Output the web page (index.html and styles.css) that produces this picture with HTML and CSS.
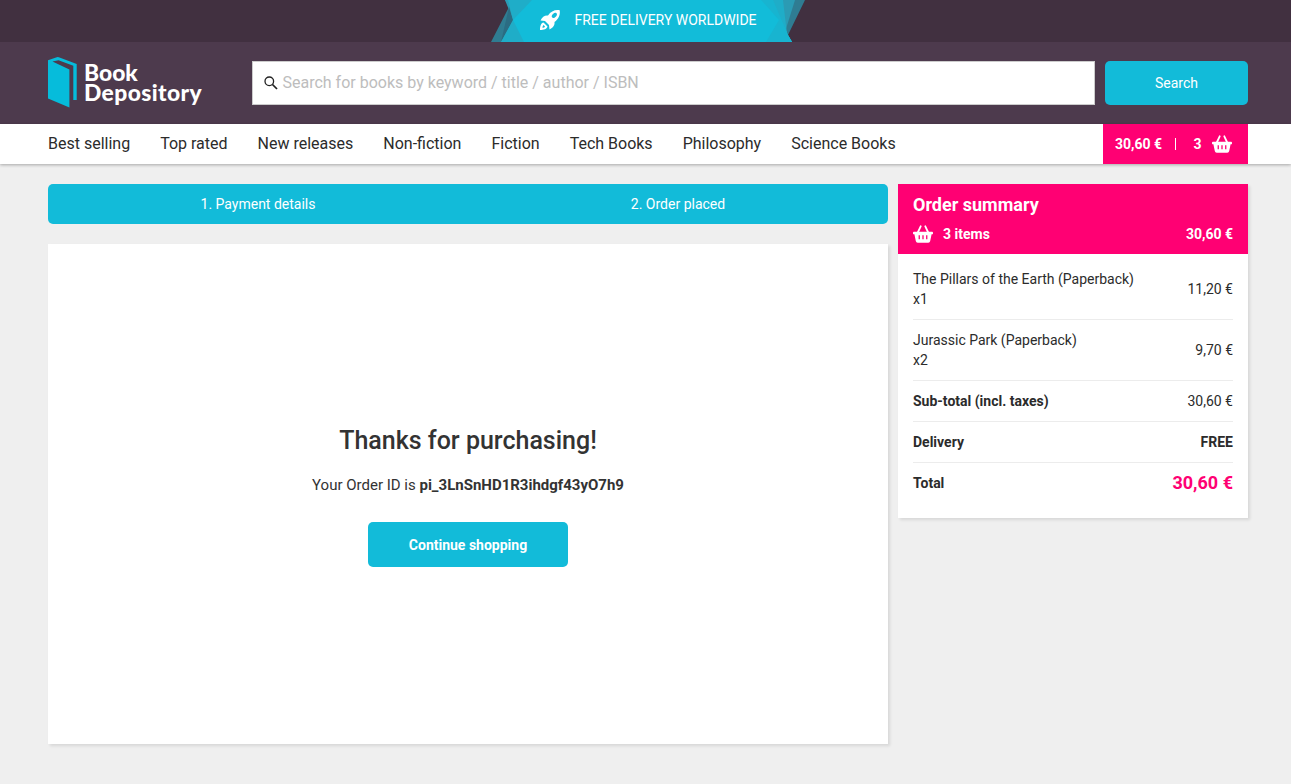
FILE: index.html
```html
<!DOCTYPE html>
<html lang="en">
<head>
<meta charset="utf-8">
<title>Book Depository</title>
<link rel="stylesheet" href="styles.css">
</head>
<body>
<svg class="sprite" aria-hidden="true">
  <symbol id="basket" viewBox="0 0 20 20">
    <path d="M4.800 8.500 7.700 2.300M15.200 8.500 12.300 2.300" fill="none" stroke="currentColor" stroke-width="1.800" stroke-linecap="round"/>
    <path fill="currentColor" fill-rule="evenodd" d="M.9 7.800h18.200a.9.9 0 0 1 .9.900v.7a.9.9 0 0 1-.9.900h-.5l-1.400 6.800a2 2 0 0 1-2 1.600H4.800a2 2 0 0 1-2-1.600L1.400 10.300H.9a.9.9 0 0 1-.9-.9v-.7a.9.9 0 0 1 .9-.9zM5.600 11.300v4h1.300v-4zM9.350 11.300v4h1.300v-4zM13.100 11.300v4h1.300v-4z"/>
  </symbol>
</svg>
<div class="promo">
  <svg class="promo-shape" width="314" height="42" viewBox="0 0 314 42">
    <path fill="#2f7c92" d="M14 0h300l-17 35 4 7H0L18 7z"/>
    <path fill="#2b9bb4" d="M14 0h290l-10 32 7 10H10l12-22z"/>
    <path fill="#2b6c83" d="M18 7 10 42l12-22z"/>
    <path fill="#1fadc8" d="M17 0h275l4 34 5 8H10l12-22z"/>
    <path fill="#12bcd9" d="M41 0h239l17 35 4 7H33L22 20z"/>
    <path fill="#18b4d0" d="M270 0h12l15 35 4 7h-26l13-22z"/>
  </svg>
  <div class="promo-text">
    <svg width="22" height="22" viewBox="0 0 22 22"><path fill="#fff" fill-rule="evenodd" d="M20.700 1.200C15.500.5 12 2.400 9 6.500c-3-.5-6 1.500-7.500 5l4.500.5 4 4 .5 4.500c3.500-1.500 5.500-4.500 5-7.500C19.500 10 21.500 6 20.700 1.200zM17.500 4.300c1 1 .3 2.400-.8 3.500s-2.500 1.800-3.500.8-.3-2.400.8-3.500 2.500-1.800 3.500-.8zM4.500 13.500C2 14 1 17 1 21c4 0 7-1 7.500-3.500zM4.600 16l1.400 1.400c-.5 1-1.300 1.300-2.500 1.400 0-1.200.3-2.200 1.100-2.800z"/></svg>
    <span>FREE DELIVERY WORLDWIDE</span>
  </div>
</div>
<header class="header">
  <a class="logo">
    <svg width="29" height="52" viewBox="0 0 29 52"><path fill="#06bcdb" d="M0 3.300 8 .4Q9.800-.2 11.500.4L28.700 7v36h-3.400V8.800L10.500 3.200 4.500 4.500l16.900 8v38L0 41.500z"/></svg>
    <span class="logo-text"><span>Book</span><span class="wide">Depository</span></span>
  </a>
  <div class="search">
    <svg width="14" height="14" viewBox="0 0 14 14"><circle cx="5.300" cy="5.300" r="4.300" fill="none" stroke="#222" stroke-width="1.300"/><path d="m8.500 8.500 4.500 4.500" stroke="#222" stroke-width="1.700"/></svg>
    <span>Search for books by keyword / title / author / ISBN</span>
  </div>
  <button class="btn search-btn">Search</button>
</header>
<nav class="nav">
  <div class="links"><a>Best selling</a><a>Top rated</a><a>New releases</a><a>Non-fiction</a><a>Fiction</a><a>Tech Books</a><a>Philosophy</a><a>Science Books</a></div>
  <div class="cart"><span>30,60 €</span><i class="divider"></i><span>3</span><svg width="20" height="20"><use href="#basket"/></svg></div>
</nav>
<main class="main">
  <section class="content">
    <div class="steps"><span>1. Payment details</span><span>2. Order placed</span></div>
    <div class="thanks">
      <h1>Thanks for purchasing!</h1>
      <p>Your Order ID is <b>pi_3LnSnHD1R3ihdgf43yO7h9</b></p>
      <button class="btn continue">Continue shopping</button>
    </div>
  </section>
  <aside class="summary">
    <div class="summary-head">
      <h2>Order summary</h2>
      <div class="summary-items"><svg width="20" height="20"><use href="#basket"/></svg><span>3 items</span><span class="amount">30,60 €</span></div>
    </div>
    <div class="rows">
      <div class="row"><span>The Pillars of the Earth (Paperback)<br>x1</span><span>11,20 €</span></div>
      <div class="row"><span>Jurassic Park (Paperback)<br>x2</span><span>9,70 €</span></div>
      <div class="row"><b>Sub-total (incl. taxes)</b><span>30,60 €</span></div>
      <div class="row"><b>Delivery</b><b>FREE</b></div>
      <div class="row"><b>Total</b><b class="total">30,60 €</b></div>
    </div>
  </aside>
</main>
</body>
</html>
```
FILE: styles.css
```css
* { box-sizing: border-box; }
body { margin: 0; min-height: 784px; background: #efefef; color: #2b2b2b; font: 14px/20px Roboto, sans-serif; overflow: hidden; }
h1, h2, p { margin: 0; }
.sprite { display: none; }
svg { display: block; flex: none; }
.promo { height: 42px; background: #413040; display: grid; padding-left: 491px; grid-template-columns: 314px; }
.promo-shape, .promo-text { grid-area: 1 / 1; }
.promo-text { display: flex; align-items: center; gap: 13.5px; padding-left: 48px; color: #fff; white-space: nowrap; height: 40px; }
.header { height: 82px; background: #4d3a4d; display: flex; align-items: center; padding-left: 48px; }
.logo { width: 204px; display: flex; gap: 7px; }
.logo-text { display: flex; flex-direction: column; color: #fff; font: 900 22.8px/19.5px Lato, sans-serif; padding-top: 6px; }
.wide { letter-spacing: .4px; }
.search { width: 843px; height: 44px; background: #fff; border: 1px solid #ccc; display: flex; align-items: center; gap: 4.5px; padding-left: 11px; color: #bdbdbd; font-size: 16px; margin-right: 10px; }
.btn { border: 0; border-radius: 5px; background: #12bbd9; color: #fff; font: 14px/20px Roboto, sans-serif; padding: 0; }
.search-btn { width: 143px; height: 44px; }
.nav { height: 40px; background: #fff; display: flex; justify-content: space-between; padding: 0 43px 0 48px; box-shadow: 0 1px 3px rgba(0,0,0,.3); }
.links { display: flex; align-items: center; gap: 30px; font-size: 16px; }
.cart { width: 145px; background: #ff0073; color: #fff; display: flex; align-items: center; padding-left: 12px; font-weight: bold; }
.divider { width: 1px; height: 12px; background: #fff; margin: 0 17.5px 0 13px; }
.cart svg { margin-left: 10.5px; }
.main { display: flex; align-items: flex-start; gap: 10px; padding: 20px 0 0 48px; }
.content { width: 840px; }
.steps { height: 40px; border-radius: 5px; background: #12bbd9; color: #fff; display: grid; grid-template-columns: 1fr 1fr; align-items: center; text-align: center; }
.thanks { margin-top: 20px; height: 500px; background: #fff; box-shadow: 2px 2px 3px rgba(0,0,0,.1); display: flex; flex-direction: column; align-items: center; padding-top: 182px; color: #333; }
.thanks h1 { font-size: 25px; line-height: 30px; font-weight: 500; }
.thanks p { margin: 19px 0 27px; font-size: 15px; }
.continue { width: 200px; height: 45px; font-weight: bold; }
.summary { width: 350px; height: 334px; background: #fff; box-shadow: 2px 2px 3px rgba(0,0,0,.1); }
.summary-head { height: 70px; padding: 10px 15px; background: #ff0073; color: #fff; font-weight: bold; }
.summary h2 { font-size: 18px; line-height: 22px; }
.summary-items { display: flex; align-items: center; gap: 10px; margin-top: 8px; }
.amount { margin-left: auto; }
.rows { padding: 5px 15px; }
.row { display: flex; justify-content: space-between; align-items: center; padding: 10px 0; border-bottom: 1px solid #ececec; }
.row:last-child { border-bottom: 0; }
.total { font-size: 18px; color: #ff0073; }
```
